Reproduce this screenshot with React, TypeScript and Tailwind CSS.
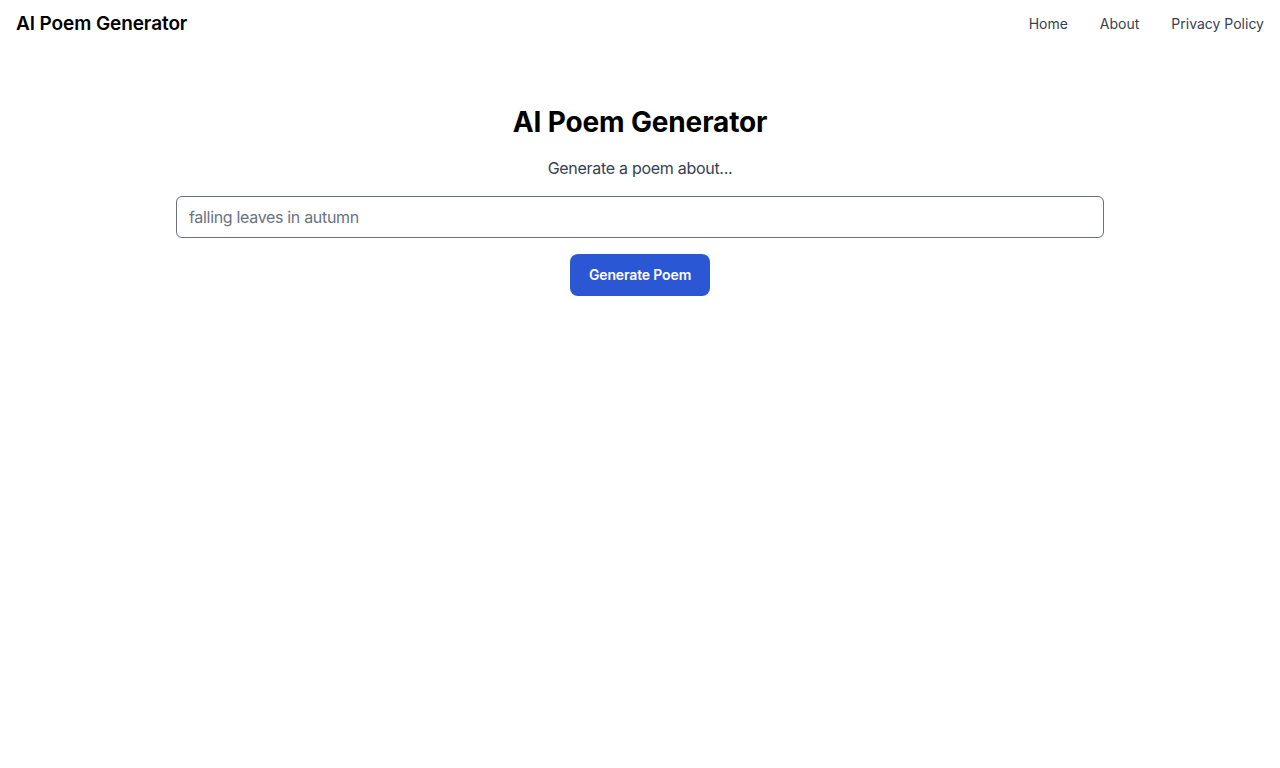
import React from "react";

export default function App() {
  return (
    <div className="min-h-screen bg-white" style={{ fontFamily: "Inter, 'Noto Sans', sans-serif" }}>
      <header className="flex h-12 items-center justify-between px-4">
        <div className="text-[19px] leading-7 font-semibold tracking-[-0.005em] text-black">AI Poem Generator</div>
        <nav className="flex items-center gap-8 text-sm text-gray-700">
          <a href="#">Home</a>
          <a href="#">About</a>
          <a href="#">Privacy Policy</a>
        </nav>
      </header>
      <main className="flex flex-col items-center pt-14">
        <h1 className="text-[28px] leading-9 font-bold tracking-[-0.005em] text-black">AI Poem Generator</h1>
        <p className="mt-4 text-base tracking-[-0.018em] text-gray-700">Generate a poem about...</p>
        <input
          type="text"
          placeholder="falling leaves in autumn"
          className="mt-4 h-[42px] w-[928px] rounded-md border border-gray-500 px-3 text-base tracking-[-0.02em] text-gray-900 placeholder:text-gray-500 outline-none"
        />
        <button className="mt-4 h-[42px] w-[140px] rounded-lg bg-[#2b56d4] text-sm font-semibold tracking-[-0.01em] text-white">
          Generate Poem
        </button>
      </main>
    </div>
  );
}
